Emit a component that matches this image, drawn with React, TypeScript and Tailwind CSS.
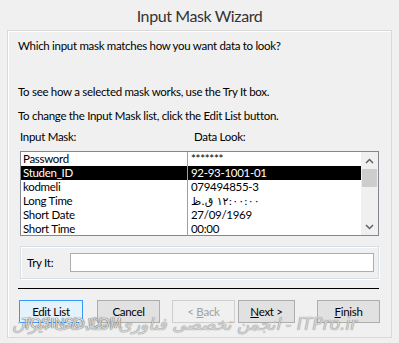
import React from "react";

const rows: [string, React.ReactNode][] = [
  ["Password", "*******"],
  ["Studen_ID", "92-93-1001-01"],
  ["kodmeli", "079494855-3"],
  ["Long Time", <span dir="rtl" className="font-['DejaVu_Sans',sans-serif] text-[11px] tracking-normal">۱۲:۰۰:۰۰ ق.ظ</span>],
  ["Short Date", "27/09/1969"],
  ["Short Time", "00:00"],
];

function Btn({ children, className = "" }: { children: React.ReactNode; className?: string }) {
  return (
    <div
      className={`h-[23px] flex items-center justify-center border text-[11.5px] leading-[16px] tracking-[-0.3px] ${className}`}
    >
      {children}
    </div>
  );
}

export default function App() {
  return (
    <div className="relative w-[399px] h-[343px] overflow-hidden bg-[#f0f0f0] text-[#000] font-['Lato','DejaVu_Sans',sans-serif] flex flex-col">
      <div className="h-[30px] flex items-center justify-center pt-[2px] text-[16px] tracking-[-0.4px] text-[#333]">
        Input Mask Wizard
      </div>
      <div className="mx-[7px] h-[308px] border border-[#d9d9d9] shadow-[inset_1px_1px_0_#ffffff] bg-[#f0f0f0] px-[10px] flex flex-col text-[11.5px] tracking-[-0.3px] leading-[16px]">
        <p className="mt-[7px]">Which input mask matches how you want data to look?</p>
        <p className="mt-[30px]">To see how a selected mask works, use the Try It box.</p>
        <p className="mt-[8px]">To change the Input Mask list, click the Edit List button.</p>
        <div className="mt-[5px] ml-[2px] flex">
          <span className="w-[174px]">Input Mask:</span>
          <span>Data Look:</span>
        </div>
        <div className="mt-[6px] ml-[2px] w-[359px] h-[85px] border border-[#828790] bg-white flex">
          <div className="flex-1 flex flex-col">
            {rows.map(([a, b], i) => (
              <div
                key={i}
                className={`h-[14px] flex leading-[14px] ${i === 1 ? "bg-black text-white" : ""}`}
              >
                <div className="w-[167px] pl-[2px] border-r border-[#a0a0a0]">{a}</div>
                <div className="pl-[3px]">{b}</div>
              </div>
            ))}
          </div>
          <div className="w-[17px] bg-[#f0f0f0] flex flex-col items-center">
            <div className="h-[17px] flex items-center justify-center">
              <svg width="9" height="6" viewBox="0 0 9 6">
                <path d="M1 5 L4.5 1.5 L8 5" fill="none" stroke="#606060" strokeWidth="1.5" />
              </svg>
            </div>
            <div className="w-[15px] h-[18px] bg-[#cdcdcd]" />
            <div className="flex-1" />
            <div className="h-[17px] flex items-center justify-center">
              <svg width="9" height="6" viewBox="0 0 9 6">
                <path d="M1 1 L4.5 4.5 L8 1" fill="none" stroke="#606060" strokeWidth="1.5" />
              </svg>
            </div>
          </div>
        </div>
        <div className="mt-[10px] ml-[2px] w-[359px] h-[33px] border border-[#d5dfe5] shadow-[inset_1px_1px_0_#ffffff,1px_1px_0_#ffffff] flex items-center">
          <span className="ml-[6px] w-[43px]">Try It:</span>
          <div className="w-[304px] h-[19px] bg-white border border-[#abadb3]" />
        </div>
        <div className="mt-[9px] w-[361px] h-[1px] bg-black" />
        <div className="mt-[11px] flex ml-[1px]">
          <Btn className="w-[64px] border-[#3399ff] bg-[#e5f1fb] text-black">
            Edit List
          </Btn>
          <Btn className="ml-[14px] w-[63px] border-[#adadad] bg-[#e1e1e1] text-black">Cancel</Btn>
          <Btn className="ml-[12px] w-[63px] border-[#cfcfcf] bg-[#f0f0f0] text-[#a0a0a0]">
            &lt;&nbsp;<span className="underline">B</span>ack
          </Btn>
          <Btn className="ml-[3px] w-[57px] border-[#adadad] bg-[#e1e1e1] text-black">
            <span className="underline">N</span>ext &gt;
          </Btn>
          <Btn className="ml-[22px] w-[63px] border-[#adadad] bg-[#e1e1e1] text-black">
            <span className="underline">F</span>inish
          </Btn>
        </div>
      </div>
      <div className="absolute left-[22px] top-[315px] text-[14px] leading-[16px] text-[#e0e0e0] [text-shadow:0_0_1px_#555,0_0_1px_#555] font-['Liberation_Sans',sans-serif]">
        TOSINSO.COM
      </div>
      <div className="absolute left-[12px] top-[313px] w-[376px] text-[17px] leading-[22px] italic text-[#d2d2d2] [text-shadow:0_0_1px_#666] font-['DejaVu_Sans',sans-serif] whitespace-nowrap">
        انجمن تخصصی فناوری اطلاعات ایران - ITPro.ir
      </div>
    </div>
  );
}
